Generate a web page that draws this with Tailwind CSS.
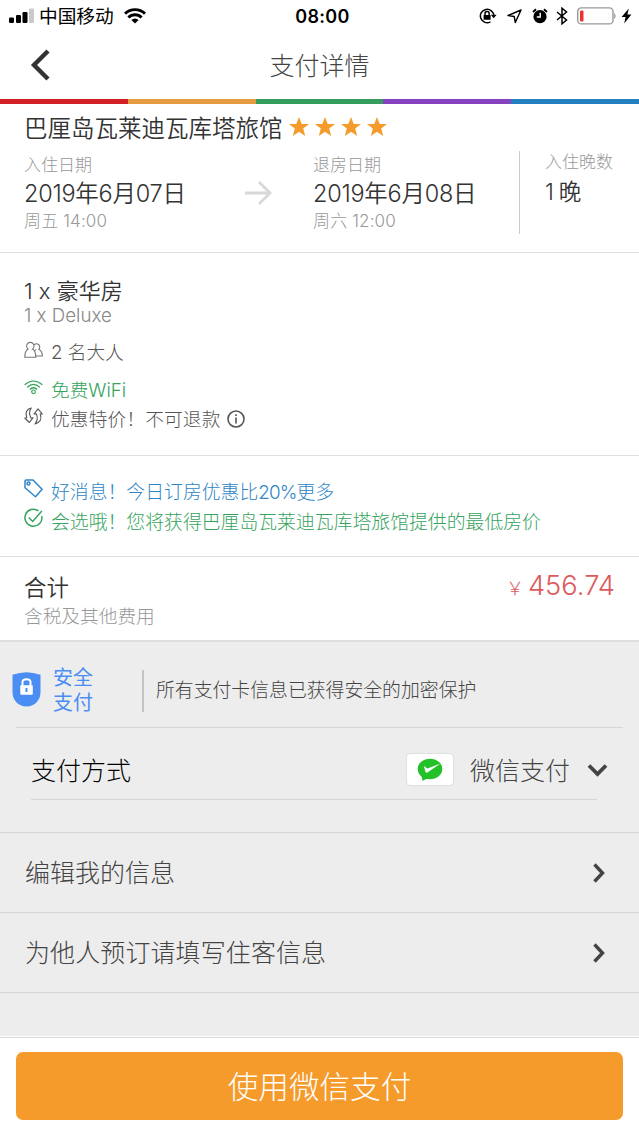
<!DOCTYPE html>
<html lang="zh-CN">
<head>
<meta charset="utf-8">
<title>支付详情</title>
<script src="https://cdn.jsdelivr.net/npm/@tailwindcss/browser@4"></script>
</head>
<body class="w-[639px] h-[1136px] overflow-hidden bg-white font-['Inter','Noto_Sans_CJK_SC',sans-serif] font-light text-[#333] whitespace-nowrap">
<div class="flex flex-col h-[1136px]">

  <!-- Status bar -->
  <div class="h-8 shrink-0 grid grid-cols-3 items-center text-black">
    <div class="flex items-center pl-[9px]">
      <svg class="w-[25px] h-4" viewBox="0 0 25 16"><rect x="0" y="9.500" width="5" height="5.500" rx="1.200"/><rect x="7" y="7" width="5" height="8" rx="1.200"/><rect x="13.500" y="4" width="5" height="11" rx="1.200"/><rect x="20" y="0.500" width="5" height="14.500" rx="1.200" fill="#c9c9c9"/></svg>
      <span class="ml-[5px] text-[18.700px] leading-[34px] h-8 font-normal">中国移动</span>
      <svg class="ml-[10px] w-[22px] h-4" viewBox="0 0 22 16" fill="none" stroke="#000" stroke-width="2.900"><path d="M1 5.600A14.500 14.500 0 0 1 21 5.600"/><path d="M4.400 9.500A9.300 9.300 0 0 1 17.600 9.500"/><path d="M11 15.500L7.400 12A5 5 0 0 1 14.600 12Z" fill="#000" stroke="none"/></svg>
    </div>
    <div class="text-center pl-[6px] text-[18px] leading-[34px] h-8 font-semibold tracking-[0.3px]">08:00</div>
    <div class="flex items-center justify-end pr-[7px]">
      <svg class="w-[18px] h-4" viewBox="0 0 18 16" fill="none" stroke="#000" stroke-width="1.500"><path d="M14.800 8A6.700 6.700 0 1 0 11.500 13.800"/><path d="M11.800 6.800H17.600L14.700 10.200Z" fill="#000" stroke="none"/><rect x="4.600" y="7" width="7" height="4.800" rx=".6" fill="#000" stroke="none"/><path d="M6 7V5.700A2.100 2.100 0 0 1 10.200 5.700V7"/></svg>
      <svg class="ml-[10px] w-[15px] h-[15px]" viewBox="0 0 15 15" fill="none" stroke="#000" stroke-width="1.400" stroke-linejoin="round"><path d="M14 1L1 6.500L7.200 7.500L8.300 13.500Z"/></svg>
      <svg class="ml-[10px] w-4 h-4" viewBox="0 0 16 16"><circle cx="8" cy="8.700" r="6.600"/><path d="M1 3.900L4 1.300M15 3.900L12 1.300" stroke="#000" stroke-width="2"/><path d="M8.200 4.800V9H4.800" fill="none" stroke="#fff" stroke-width="1.400"/></svg>
      <svg class="ml-[8px] w-3 h-[18px]" viewBox="0 0 12 18" fill="none" stroke="#000" stroke-width="1.500"><path d="M1 5L10.500 13L6 16.800V1.200L10.500 5L1 13"/></svg>
      <svg class="ml-[9px] w-[40px] h-[18px]" viewBox="0 0 40 18"><rect x=".7" y=".9" width="35.300" height="16" rx="3.500" fill="#fff" stroke="#999" stroke-width="1.400"/><rect x="3" y="3.500" width="3.500" height="11" rx="1" fill="#e8352e"/><path d="M37.500 6.500Q39.200 9 37.500 11.500Z" fill="#999" stroke="#999" stroke-width=".6"/></svg>
      <svg class="ml-[4px] w-[11px] h-4" viewBox="0 0 11 16"><path d="M7.800 0.500L.6 9H4.600L3.200 15.500L10.400 6.600H6.400Z"/></svg>
    </div>
  </div>

  <!-- Navigation header -->
  <header class="h-[67px] shrink-0 grid grid-cols-[1fr_auto_1fr] items-center">
    <svg class="-mt-[2px] ml-[30px] w-5 h-8" viewBox="0 0 20 32" fill="none" stroke="#333" stroke-width="4.400"><path d="M18 2L4 16L18 30"/></svg>
    <h1 class="text-[25px] leading-[69px] h-[67px] text-[#444]">支付详情</h1>
  </header>
  <div class="h-[5px] shrink-0 grid grid-cols-5">
    <i class="bg-[#d22027]"></i><i class="bg-[#e59b40]"></i><i class="bg-[#359e5e]"></i><i class="bg-[#8743bf]"></i><i class="bg-[#237fbd]"></i>
  </div>

  <!-- Hotel and dates -->
  <section class="h-[149px] shrink-0 border-b border-[#dfdfdf] px-6">
    <div class="flex items-center h-[47px]">
      <h2 class="text-[23.500px] leading-[49px] h-[47px] font-[350]">巴厘岛瓦莱迪瓦库塔旅馆</h2>
      <div class="flex gap-[6px] ml-[6px] -mt-[2px]">
        <svg class="w-5 h-5" viewBox="0 0 20 20" fill="#f59b2c"><path d="M10 0L12.700 7H20L14.200 11.600L16.200 19L10 14.700L3.800 19L5.800 11.600L0 7H7.300Z"/></svg>
        <svg class="w-5 h-5" viewBox="0 0 20 20" fill="#f59b2c"><path d="M10 0L12.700 7H20L14.200 11.600L16.200 19L10 14.700L3.800 19L5.800 11.600L0 7H7.300Z"/></svg>
        <svg class="w-5 h-5" viewBox="0 0 20 20" fill="#f59b2c"><path d="M10 0L12.700 7H20L14.200 11.600L16.200 19L10 14.700L3.800 19L5.800 11.600L0 7H7.300Z"/></svg>
        <svg class="w-5 h-5" viewBox="0 0 20 20" fill="#f59b2c"><path d="M10 0L12.700 7H20L14.200 11.600L16.200 19L10 14.700L3.800 19L5.800 11.600L0 7H7.300Z"/></svg>
      </div>
    </div>
    <div class="flex">
      <div class="mt-px w-[220px] text-[17px] text-[#999]">
        <p class="leading-[26px]">入住日期</p>
        <p class="text-[23.500px] leading-[32px] text-[#333] font-[350] tracking-[-0.250px]">2019年6月07日</p>
        <p class="leading-[22px] tracking-[0.150px]">周五 14:00</p>
      </div>
      <svg class="mt-[30px] w-7 h-6" viewBox="0 0 28 24" fill="none" stroke="#d8d8d8" stroke-width="2.800"><path d="M1 12H26M15 1L26 12L15 23"/></svg>
      <div class="mt-px ml-[41px] w-[206px] text-[17px] text-[#999]">
        <p class="leading-[26px]">退房日期</p>
        <p class="text-[23.500px] leading-[32px] text-[#333] font-[350] tracking-[-0.250px]">2019年6月08日</p>
        <p class="leading-[22px] tracking-[0.150px]">周六 12:00</p>
      </div>
      <div class="h-[83px] border-l border-[#ccc] pl-[25px] text-[17px] text-[#999]">
        <p class="leading-[22px]">入住晚数</p>
        <p class="text-[22.500px] leading-[37px] text-[#333] font-[350]">1<span class="ml-[5px]">晚</span></p>
      </div>
    </div>
  </section>

  <!-- Room -->
  <section class="h-[203px] shrink-0 border-b border-[#dfdfdf] px-6 pt-[24px] text-[18.700px] text-[#555]">
    <h3 class="text-[22px] leading-[28px] text-[#333] font-[350]">1 x 豪华房</h3>
    <p class="leading-[22px] text-[#888]">1 x Deluxe</p>
    <div class="mt-[9px] flex h-[34px] leading-[34px]">
      <svg class="mt-[5px] mr-2 w-[19px] h-[18px]" viewBox="0 0 19 18" fill="none" stroke="#777" stroke-width="1.100"><path d="M4.200 8.100A3.700 3.700 0 1 1 8.400 8.100C11 9.400 11.800 12 11.800 16.200H.8C.8 12 1.600 9.400 4.200 8.100Z"/><path d="M10.200 3.800A3 3 0 1 1 14.800 8.300C17.400 9.600 18.300 12 18.300 15H11.800M12.300 8.400L10.500 9.600"/></svg>
      2 名大人
    </div>
    <div class="mt-[5px] flex h-[31px] leading-[32px] text-[#35a35d]">
      <svg class="mt-[5px] mr-2 w-[19px] h-[15px]" viewBox="0 0 19 15" fill="none" stroke="#35a35d" stroke-width="1.200"><path d="M.6 4.800Q9.500-2.800 18.400 4.800"/><path d="M3.200 7.300Q9.500 1.500 15.800 7.300"/><path d="M5.800 9.500Q9.500 6 13.200 9.500"/><circle cx="9.500" cy="11.800" r="1.800"/></svg>
      免费WiFi
    </div>
    <div class="flex h-[28px] leading-[28px]">
      <svg class="mt-[1px] mr-2 w-[19px] h-[18px]" viewBox="0 0 19 18" fill="none" stroke="#555" stroke-width="1.100" stroke-linejoin="round"><path d="M7.300 1C2.500 2 .8 6 2.800 10.800L.8 11L5.300 15.500L9 10.800L7 11C4.800 7 5 4 7.300 1Z"/><path d="M11 17C16.500 15.500 18 12 16.200 7L18.400 7L14 1.800L10 7L12.300 6.800C14 10.500 13.500 14 11 17Z"/></svg>
      <span class="tracking-[0.150px]">优惠特价！不可退款</span>
      <svg class="mt-[4px] ml-[6px] w-[18px] h-[18px]" viewBox="0 0 18 18" fill="none" stroke="#555" stroke-width="1.600"><circle cx="9" cy="9" r="8"/><path d="M9 7.500V13.500M9 4.300V6.100"/></svg>
    </div>
  </section>

  <!-- Offers -->
  <section class="h-[101px] shrink-0 border-b border-[#dfdfdf] px-6 pt-[22px] text-[18.850px]">
    <div class="flex h-[30px] leading-[30px] text-[#2f86c6]">
      <svg class="mt-[1px] mr-2 w-[19px] h-[19px]" viewBox="0 0 19 19" fill="none" stroke="#2f86c6" stroke-width="1.500" stroke-linejoin="round"><path d="M1 2.200Q1 1 2.200 1H9L18.100 10.300L11.500 17.800L1 8.800Z"/><circle cx="4.500" cy="4.600" r="1.500"/></svg>
      <span>好消息！今日订房优惠比<span class="tracking-[-0.900px]">20%</span>更多</span>
    </div>
    <div class="flex h-[30px] leading-[30px] text-[#35a35d]">
      <svg class="mt-0 mr-2 w-[19px] h-[20px]" viewBox="0 0 19 20" fill="none" stroke="#35a35d" stroke-width="1.500"><path d="M14.500 2.900A8.500 8.500 0 1 0 17.800 8.200"/><path d="M4.700 9.500L8.700 13.500L17.800 3"/></svg>
      会选哦！您将获得巴厘岛瓦莱迪瓦库塔旅馆提供的最低房价
    </div>
  </section>

  <!-- Total -->
  <section class="h-[83px] shrink-0 px-6 pt-[15px] flex justify-between">
    <div>
      <p class="text-[22.500px] leading-[32px] font-[350]">合计</p>
      <p class="text-[18.700px] leading-[26px] text-[#999]">含税及其他费用</p>
    </div>
    <p class="flex items-baseline -mt-[2px] text-[#dc5a5c] leading-[32px] h-8 font-[350]"><span class="text-[18px] font-light mr-[4px]">￥</span><span class="text-[27.300px]">456.74</span></p>
  </section>

  <!-- Payment -->
  <main class="h-[396px] shrink-0 bg-[#ededed] border-t-2 border-[#dedede] text-[25px] text-[#444]">
    <div class="h-[86px] mx-[16px] border-b border-[#d6d6d6] flex items-center pt-[12px]">
      <svg class="-mt-[3px] -ml-1 w-[29px] h-[35px]" viewBox="0 0 29 35"><path d="M14.500 .3Q21 .3 28.500 2.800V20C28.500 28 23 34.500 14.500 34.500S.5 28 .5 20V2.800Q8 .3 14.500 .3Z" fill="#4a8df3"/><rect x="8.300" y="13.300" width="12.500" height="9.500" rx="1" fill="#fff"/><path d="M10.500 14V10Q10.500 7.200 14.500 7.200T18.500 10V14" fill="none" stroke="#fff" stroke-width="2"/><path d="M14.500 16V20" stroke="#4a8df3" stroke-width="2"/></svg>
      <div class="ml-[12px] text-[20px] leading-[25px] text-[#4a8df3] font-normal">安全<br>支付</div>
      <div class="ml-[49px] h-[42px] border-l-2 border-[#c4c4c4] pl-[12px] text-[18.850px] leading-[41px]">所有支付卡信息已获得安全的加密保护</div>
    </div>
    <div class="ml-[31px] mr-[42px] h-[72px] border-b border-[#d6d6d6] flex items-center pt-[14px]">
      <span class="text-black grow pt-[2px]">支付方式</span>
      <div class="-mt-[2px] w-[46px] h-[31px] rounded-[3px] bg-white outline outline-[#e0e0e0] flex items-center justify-center">
        <svg class="w-[26px] h-[24px]" viewBox="0 0 26 24"><ellipse cx="13" cy="11" rx="12.300" ry="10.300" fill="#23c028"/><path d="M4.500 17L5.500 23L11 20Z" fill="#23c028"/><path d="M6.800 8L10.500 10.500L23.500 5.500L10 14.800L8.600 14.200Z" fill="#fff"/></svg>
      </div>
      <span class="ml-[17px] pt-[2px]">微信支付</span>
      <svg class="ml-[17px] -mt-[2px] -mr-[11px] w-[21px] h-[14px]" viewBox="0 0 21 14" fill="none" stroke="#444" stroke-width="3.800"><path d="M2 2.500L10.500 11L19 2.500"/></svg>
    </div>
    <div class="h-[33px] border-b border-[#d6d6d6]"></div>
    <div class="h-[80px] border-b border-[#d6d6d6] flex items-center justify-between pl-[25px] pr-[34px]">
      <span class="pt-[2px]">编辑我的信息</span>
      <svg class="w-3 h-5" viewBox="0 0 12 20" fill="none" stroke="#444" stroke-width="3.400"><path d="M1.500 1.500L9.500 10L1.500 18.500"/></svg>
    </div>
    <div class="h-[80px] border-b border-[#d6d6d6] flex items-center justify-between pl-[25px] pr-[34px]">
      <span class="pt-[3px] tracking-[0.100px]">为他人预订请填写住客信息</span>
      <svg class="w-3 h-5" viewBox="0 0 12 20" fill="none" stroke="#444" stroke-width="3.400"><path d="M1.500 1.500L9.500 10L1.500 18.500"/></svg>
    </div>
    <div class="h-[45px] border-b border-[#d9d9d9]"></div>
  </main>

  <footer class="grow px-4 pt-4">
    <button class="block w-full h-[68px] rounded-[7px] bg-[#f59b2c] text-white text-[30.600px] leading-[70px] font-light">使用微信支付</button>
  </footer>
</div>
</body>
</html>
